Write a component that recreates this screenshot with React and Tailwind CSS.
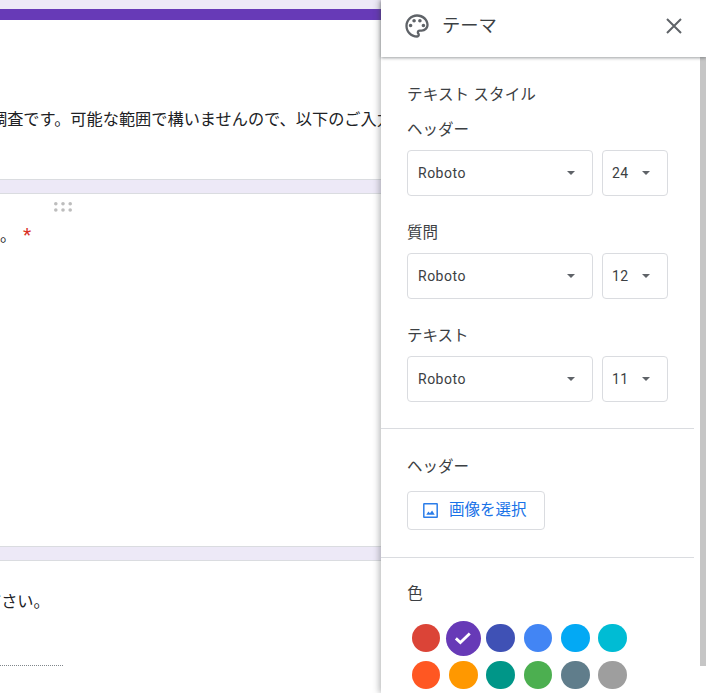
import React from "react";

const FF = "font-['Roboto','Noto_Sans_CJK_JP',sans-serif]";

function Caret() {
  return <span className="w-0 h-0 border-x-[4px] border-x-transparent border-t-[4.5px] border-t-[#5f6368]" />;
}

function Select({ value, big }) {
  return (
    <div className={`h-[46px] border border-[#dadce0] rounded-[4px] flex items-center justify-between text-[14px] text-[#3c4043] tracking-[0.5px] ${big ? "w-[186px] pl-[10px] pr-[17px]" : "w-[66px] pl-[9px] pr-[17px]"}`}>
      <span>{value}</span>
      <Caret />
    </div>
  );
}

function FontGroup({ label, font, size }) {
  return (
    <div className="flex flex-col">
      <div className="h-[21px] leading-[21px] text-[15.5px] text-[#3c4043]">{label}</div>
      <div className="flex gap-[9px] mt-[9px]">
        <Select value={font} big />
        <Select value={size} />
      </div>
    </div>
  );
}

const row1 = ["#db4437", "#673ab7", "#3f51b5", "#4285f4", "#03a9f4", "#00bcd4"];
const row2 = ["#ff5722", "#ff9800", "#009688", "#4caf50", "#607d8b", "#9e9e9e"];

function Dot({ color, selected }) {
  return (
    <div className="h-[37px] flex items-center justify-center">
      {selected ? (
        <div className="w-[35px] h-[35px] rounded-full flex items-center justify-center" style={{ backgroundColor: color }}>
          <svg width="18" height="18" viewBox="0 0 24 24" fill="none" stroke="#fff" strokeWidth="3.8"><path d="M2.5 12.5l6 5.5L21 6" /></svg>
        </div>
      ) : (
        <div className="w-[28.5px] h-[28.5px] rounded-full" style={{ backgroundColor: color }} />
      )}
    </div>
  );
}

export default function App() {
  return (
    <div className={`w-[706px] h-[693px] overflow-hidden flex bg-white ${FF}`}>
      <div className="w-[381px] h-full flex flex-col overflow-hidden bg-[#ede9f7] shrink-0">
        <div className="h-[9px] shrink-0" />
        <div className="h-[11px] bg-[#673ab7] shrink-0" />
        <div className="h-[160px] bg-white border-b border-[#dadce0] shrink-0 overflow-hidden pt-[88px]">
          <div className="whitespace-nowrap ml-[-9px] text-[16.2px] leading-[24px] text-[#202124]">調査です。可能な範囲で構いませんので、以下のご入力</div>
        </div>
        <div className="h-[13px] shrink-0" />
        <div className="h-[354px] bg-white border-y border-[#dadce0] shrink-0 flex flex-col">
          <div className="pl-[54px] pt-[8px] h-[23px] shrink-0">
            <svg width="18" height="10" viewBox="0 0 18 10" fill="#bdbdbd" className="block">
              <circle cx="1.8" cy="1.8" r="1.8" /><circle cx="9" cy="1.8" r="1.8" /><circle cx="16.2" cy="1.8" r="1.8" />
              <circle cx="1.8" cy="8" r="1.8" /><circle cx="9" cy="8" r="1.8" /><circle cx="16.2" cy="8" r="1.8" />
            </svg>
          </div>
          <div className="flex mt-[7px] text-[16.2px] leading-[24px] text-[#202124]">
            <span className="w-[22px]">。</span>
            <span className="text-[#d93025] text-[19px] leading-[24px] ml-[1px] mt-[-1px]">*</span>
          </div>
        </div>
        <div className="h-[13px] shrink-0" />
        <div className="flex-1 bg-white border-t border-[#dadce0] overflow-hidden">
          <div className="whitespace-nowrap ml-[-15px] mt-[29px] text-[16.2px] leading-[24px] text-[#202124]">ださい。</div>
          <div className="w-[63px] mt-[51px] border-b border-dotted border-[#80868b]" />
        </div>
      </div>

      <div className="w-[325px] h-full flex flex-col bg-white shadow-[-2px_0_6px_rgba(60,64,67,0.35)] relative">
        <div className="h-[57px] shrink-0 flex items-center pl-[21.5px] pr-[23.5px] pb-[5px] shadow-[0_1px_3px_rgba(60,64,67,0.5)] relative z-10 bg-white">
          <svg width="28" height="28" viewBox="0 0 24 24" fill="#5f6368">
            <path d="M12 2C6.49 2 2 6.49 2 12s4.49 10 10 10c1.38 0 2.5-1.12 2.5-2.5 0-.61-.23-1.2-.64-1.67-.08-.1-.13-.21-.13-.33 0-.28.22-.5.5-.5H16c3.31 0 6-2.69 6-6 0-4.96-4.49-9-10-9zm5.5 11c-.83 0-1.5-.67-1.5-1.5s.67-1.5 1.5-1.5 1.5.67 1.5 1.5-.67 1.5-1.5 1.5zm-3-4c-.83 0-1.5-.67-1.5-1.5S13.67 6 14.5 6s1.5.67 1.5 1.5S15.33 9 14.5 9zM5 11.5c0-.83.67-1.5 1.5-1.5s1.5.67 1.5 1.5S7.33 13 6.5 13 5 12.33 5 11.5zm6-4c0 .83-.67 1.5-1.5 1.5S8 8.33 8 7.5 8.67 6 9.5 6s1.5.67 1.5 1.5zM12 20c-4.41 0-8-3.59-8-8s3.59-8 8-8 8 3.14 8 7c0 2.21-1.79 4-4 4h-1.77c-1.38 0-2.5 1.12-2.5 2.5 0 .59.21 1.17.6 1.63.1.12.17.26.17.37 0 .28-.22.5-.5.5z" />
          </svg>
          <span className="ml-[11.5px] text-[18.3px] text-[#3c4043] flex-1">テーマ</span>
          <svg width="18" height="18" viewBox="0 0 18 18" stroke="#5f6368" strokeWidth="2" fill="none"><path d="M2 2l14 14M16 2L2 16" /></svg>
        </div>

        <div className="flex-1 flex min-h-0">
          <div className="w-[313px] shrink-0 overflow-hidden">
            <div className="pl-[26px] pt-[28px]">
              <div className="h-[21px] leading-[21px] text-[15.6px] tracking-[0.1px] text-[#3c4043]">テキスト スタイル</div>
              <div className="mt-[14px] flex flex-col gap-[27px]">
                <FontGroup label="ヘッダー" font="Roboto" size="24" />
                <FontGroup label="質問" font="Roboto" size="12" />
                <FontGroup label="テキスト" font="Roboto" size="11" />
              </div>
            </div>
            <div className="mt-[26px] border-b border-[#dadce0]" />
            <div className="pl-[26px] pt-[28px] pb-[27px]">
              <div className="h-[21px] leading-[21px] text-[15.5px] text-[#3c4043]">ヘッダー</div>
              <div className="mt-[13px] w-[138px] h-[39px] border border-[#dadce0] rounded-[4px] flex items-center pl-[14px] text-[#1a73e8] text-[15.5px]">
                <svg width="17" height="17" viewBox="0 0 16 16" fill="#2b7de9">
                  <path fillRule="evenodd" d="M2 1h12a1 1 0 0 1 1 1v12a1 1 0 0 1-1 1H2a1 1 0 0 1-1-1V2a1 1 0 0 1 1-1zm.4 1.4v11.2h11.2V2.4z" />
                  <path d="M4 12l2-3 1.5 1.7L9.5 8l2.5 4z" />
                </svg>
                <span className="ml-[10px]">画像を選択</span>
              </div>
            </div>
            <div className="border-b border-[#dadce0]" />
            <div className="pl-[26.3px] pt-[26px]">
              <div className="h-[21px] leading-[21px] text-[15.5px] text-[#3c4043]">色</div>
              <div className="mt-[14.5px] grid grid-cols-[repeat(6,37.33px)] w-[224px]">
                {row1.map((c, i) => <Dot key={c} color={c} selected={i === 1} />)}
                {row2.map((c) => <Dot key={c} color={c} />)}
              </div>
            </div>
          </div>
          <div className="flex-1 flex justify-end">
            <div className="w-[6px] h-[609px] bg-[#c6c6c6]" />
          </div>
        </div>
      </div>
    </div>
  );
}
